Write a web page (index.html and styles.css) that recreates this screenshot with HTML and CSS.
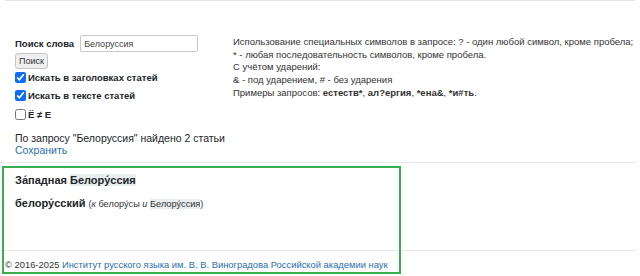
FILE: index.html
```html
<!DOCTYPE html>
<html lang="ru">
<head>
    <meta charset="UTF-8">
    <title>Поиск слова</title>
    <link rel="stylesheet" href="styles.css">
</head>
<body>
    <div class="topline"></div>

    <div class="search">
        <div class="search-left">
            <div class="word-row">
                <label class="word-label" for="word">Поиск слова</label>
                <input type="text" id="word" class="word-input" value="Белоруссия">
            </div>
            <button class="search-btn">Поиск</button>
            <label class="check"><input type="checkbox" checked> Искать в заголовках статей</label>
            <label class="check"><input type="checkbox" checked> Искать в тексте статей</label>
            <label class="check"><input type="checkbox"> Ё ≠ Е</label>
            <div class="found">По запросу "Белоруссия" найдено 2 статьи</div>
            <a class="link" href="#">Сохранить</a>
        </div>
        <div class="search-help">
            <div>Использование специальных символов в запросе: ? - один любой символ, кроме пробела;</div>
            <div>* - любая последовательность символов, кроме пробела.</div>
            <div>С учётом ударений:</div>
            <div>&amp; - под ударением, # - без ударения</div>
            <div>Примеры запросов: <b>естеств*</b>, <b>ал?ергия</b>, <b>*ена&amp;</b>, <b>*и#ть</b>.</div>
        </div>
    </div>

    <hr class="rule">

    <div class="results">
        <div class="title">За́падная <span class="hl">Белору́ссия</span></div>
        <div class="entry"><b>белору́сский</b> <span class="note">(<i>к</i> белору́сы <i>и</i> <span class="hl">Белору́ссия</span>)</span></div>
    </div>

    <hr class="rule">

    <div class="footer">© 2016-2025 <a class="link" href="#">Институт русского языка им. В. В. Виноградова Российской академии наук</a></div>

    <div class="frame"></div>
</body>
</html>
```

FILE: styles.css
```css
* {
    box-sizing: border-box;
}

body {
    margin: 0;
    font-family: "Liberation Sans", Arial, sans-serif;
    color: #212529;
    background: #fff;
    position: relative;
    height: 276px;
    overflow: hidden;
}

.topline {
    height: 1px;
    margin: 0 5px;
    background: #e4e4e4;
}

.search {
    display: flex;
    padding: 34px 0 0 15px;
}

.search-left {
    width: 218px;
    flex-shrink: 0;
    display: flex;
    flex-direction: column;
    align-items: flex-start;
    font-size: 9.5px;
}

.word-row {
    display: flex;
    align-items: center;
    gap: 6px;
}

.word-label {
    font-weight: bold;
}

.word-input {
    width: 118px;
    height: 17px;
    border: 1px solid #c8c8c8;
    border-radius: 2px;
    padding: 0 3px;
    font-family: inherit;
    font-size: 9px;
    color: #444;
}

.search-btn {
    margin-top: 1px;
    height: 16px;
    padding: 0 3px;
    font-family: inherit;
    font-size: 9px;
    color: #333;
    background: #efefef;
    border: 1px solid #c4c4c4;
    border-radius: 3px;
}

.check {
    display: flex;
    align-items: center;
    gap: 2px;
    font-weight: bold;
    height: 18.5px;
    margin-top: -1px;
    margin-bottom: 1px;
}

.check input {
    margin: 0;
    width: 11px;
    height: 11px;
    accent-color: #0b6ef6;
}

.found {
    margin-top: 7px;
    font-size: 10.5px;
    line-height: 12px;
}

.link {
    color: #2a6fb2;
    text-decoration: none;
}

.search-left .link {
    font-size: 10.5px;
    line-height: 12px;
}

.search-help {
    font-size: 9.5px;
    line-height: 12.7px;
    color: #333;
    white-space: nowrap;
    padding-top: 1px;
}

.rule {
    border: 0;
    border-top: 1px solid #e9e9e9;
    margin: 6px 4px 0 0;
}

.results {
    padding: 10px 0 0 15px;
    height: 81px;
}

.title {
    font-weight: bold;
    font-size: 11px;
    line-height: 14px;
}

.entry {
    margin-top: 10px;
    font-size: 11px;
}

.note {
    font-size: 9.2px;
    color: #333;
}

.hl {
    background: #e8eef0;
}

.footer {
    padding: 8px 0 0 5px;
    font-size: 9.4px;
    color: #333;
}

.frame {
    position: absolute;
    left: 2px;
    top: 166px;
    width: 399px;
    height: 108px;
    border: 2px solid #3cae52;
    pointer-events: none;
}
```
